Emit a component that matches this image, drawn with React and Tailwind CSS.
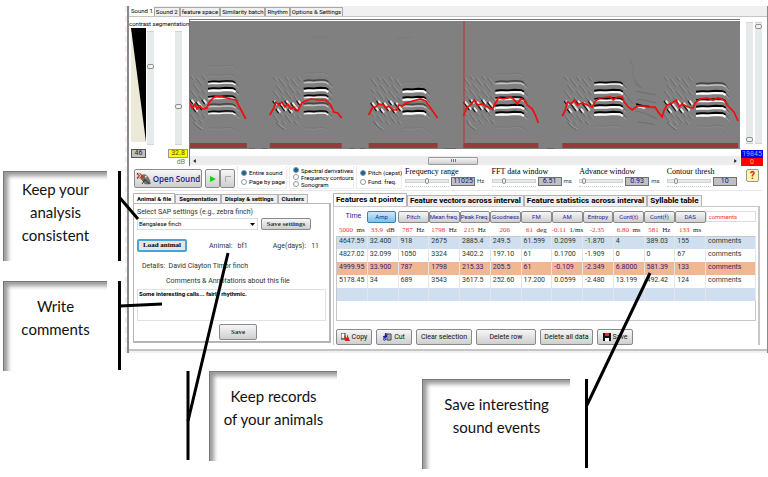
import { useState } from 'react';
import clsx from 'clsx';

const columns = ['Pitch', 'Mean freq.', 'Peak Freq.', 'Goodness', 'FM', 'AM', 'Entropy', 'Cont(t)', 'Cont(f)', 'DAS'];

const units = [
  ['5000', 'ms'], ['33.9', 'dB'], ['787', 'Hz'], ['1798', 'Hz'], ['215', 'Hz'], ['206', ''], ['61', 'deg'],
  ['-0.11', '1/ms'], ['-2.35', ''], ['6.80', 'ms'], ['581', 'Hz'], ['133', 'ms'], ['', ''],
];

const rows = [
  ['4647.59', '32.400', '918', '2675', '2885.4', '249.5', '61.599', '0.2099', '-1.870', '4', '389.03', '155', 'comments'],
  ['4827.02', '32.099', '1050', '3324', '3402.2', '197.10', '61', '0.1700', '-1.909', '0', '0', '67', 'comments'],
  ['4999.95', '33.900', '787', '1798', '215.33', '205.5', '61', '-0.109', '-2.349', '6.8000', '581.39', '133', 'comments'],
  ['5178.45', '34', '689', '3543', '3617.5', '252.60', '17.200', '0.0599', '-2.480', '13.199', '492.42', '124', 'comments'],
  ['', '', '', '', '', '', '', '', '', '', '', '', ''],
];

const rowColors = ['bg-[#cfdff0]', 'bg-white', 'bg-[#f0b890]', 'bg-white', 'bg-[#cfdff0]'];

// noise: x range of the opening notes, block: x range of the harmonic stack, lines: [y, weight]
const syllables = [
  { noise: [0, 17], block: [18, 45], lines: [[60, 2], [67, 3], [75, 2], [83, 1], [90, 2], [45, 0], [54, 0], [107, 0]] },
  { noise: [83, 112], block: [114, 138], lines: [[59, 1], [67, 3], [74, 2], [82, 1], [90, 2], [52, 0], [107, 0]] },
  { noise: [181, 212], block: [213, 236], lines: [[61, 0], [68, 3], [76, 3], [83, 1], [90, 3], [96, 0], [107, 0]] },
  { noise: [274, 305], block: [306, 334], lines: [[60, 1], [69, 3], [76, 2], [84, 3], [91, 3], [53, 0], [106, 0]] },
  { noise: [375, 403], block: [405, 433], lines: [[61, 2], [69, 4], [77, 2], [84, 3], [91, 3], [105, 0]] },
  { noise: [475, 504], block: [507, 536], lines: [[62, 1], [70, 4], [78, 2], [85, 3], [92, 4], [105, 0]] },
];

const contours = [
  '0,82 2,87 5,83 7,88 10,85 13,88 17,87 19,82 23,77 27,75 33,76 41,78 46,79 49,85 56,98',
  '80,94 84,87 86,81 89,84 92,81 95,86 98,83 101,88 104,86 108,90 112,82 116,80 121,78 129,79 136,79 141,84 144,91 148,92 152,97',
  '179,94 183,86 186,86 189,83 194,84 196,87 199,85 204,89 207,89 209,84 213,85 216,82 223,80 231,78 236,80 241,87 248,97',
  '274,95 277,87 281,84 285,79 288,84 293,83 298,86 303,88 306,82 309,77 314,78 321,76 324,78 328,83 331,78 335,79 338,84 343,88 346,94 349,102',
  '373,95 376,89 378,81 382,83 385,79 388,84 393,82 398,84 403,86 406,80 411,77 421,76 424,79 428,76 433,76 435,81 439,86 443,89 448,85 453,85 459,86 466,86 469,91 473,96 475,89 478,84 483,82 487,79 490,86 493,83 499,86 504,87 506,82 511,78 518,77 524,79 529,77 535,79 538,84 542,88 545,91 549,100',
];

const segments = [[0, 57], [80, 72], [179, 69], [274, 75], [373, 176]];

const toolButton = 'border border-[#8a8a8a] rounded-[2px] bg-linear-to-b from-[#f6f6f6] to-[#cfcfcf] flex items-center justify-center whitespace-nowrap';

function Harmonic({ x0, x1, y, weight }) {
  const w = x1 - x0;
  const tail = (dy) => `M${x0} ${y + dy + 0.6} q${w * 0.15} -1.2 ${w * 0.3} -.5 t${w * 0.3} -.3 t${w * 0.35} .8 q3 1.2 5 5`;
  const stack = (dy) => `M${x0} ${y + dy + 0.8} l${w * 0.2} -.6 l${w * 0.22} .3 l${w * 0.25} -.7 l${w * 0.25} .4 l${w * 0.1} 1.6`;
  if (weight === 0) {
    return (
      <g fill="none" strokeWidth="0.7" opacity="0.7">
        <path d={tail(0)} stroke="#6e6e6e" />
        <path d={tail(1)} stroke="#949494" />
      </g>
    );
  }
  return (
    <g fill="none">
      <path d={tail(0)} stroke="#555" strokeWidth="0.8" />
      <path d={tail(2)} stroke="#aaa" strokeWidth="0.8" />
      <path d={stack(0)} stroke={weight > 1 ? '#000' : '#444'} strokeWidth={weight > 2 ? 2 : 1.3} />
      <path d={stack(2.2)} stroke={weight > 1 ? '#fff' : '#c4c4c4'} strokeWidth={weight > 2 ? 2.2 : 1.2} />
    </g>
  );
}

function Noise({ from, to }) {
  const marks = [];
  for (let r = 0; r < 8; r++) {
    for (let x = from + (r % 2) * 3; x < to - 3; x += 6) {
      const y = 55 + r * 6 + ((x * 7 + r * 5) % 4);
      const strong = r >= 4 && r <= 5;
      marks.push(
        <g key={`${r}-${x}`} strokeWidth={strong ? 1.8 : 0.8} opacity={strong ? 0.9 : 0.55}>
          <path d={`M${x} ${y} l3 4`} stroke={strong ? '#111' : '#505050'} />
          <path d={`M${x + 1.6} ${y - 0.4} l3 4`} stroke={strong ? '#f4f4f4' : '#adadad'} />
        </g>
      );
    }
  }
  return (
    <g fill="none">
      {marks}
      <path d={`M${from + 3} 101 q3 5 9 8`} stroke="#5c5c5c" strokeWidth="0.8" />
      <path d={`M${from + 5} 101 q3 5 8 7`} stroke="#a8a8a8" strokeWidth="0.7" />
    </g>
  );
}

function Spectrogram() {
  return (
    <svg viewBox="0 0 551 129" preserveAspectRatio="none" className="block w-full h-[129px]">
      <rect width="551" height="129" fill="#808080" />
      {syllables.map((s) => (
        <g key={s.block[0]}>
          <Noise from={s.noise[0]} to={s.noise[1]} />
          {s.lines.map(([y, weight]) => (
            <Harmonic key={y} x0={s.block[0]} x1={s.block[1]} y={y} weight={weight} />
          ))}
        </g>
      ))}
      <g fill="none" stroke="#6a6a6a" strokeWidth="0.8">
        <path d="M441 38 l4 12 M443 50 q2 10 6 15" stroke="#747474" />
        <path d="M447 70 q8 2 20 4 M448 78 q8 1 19 4 M446 62 l6 5" />
        <path d="M446 82 q8 2 20 6 M446 90 q9 1 22 8 M436 74 l8 9 M448 101 q8 0 18 3" />
        <path d="M122 17 q8 -2 17 -1 M206 18 q8 -1 16 -2" stroke="#787878" />
      </g>
      <path d="M447 83 l7 2 l6 .5" fill="none" stroke="#000" strokeWidth="1.4" />
      <path d="M449 86 l7 1.4" fill="none" stroke="#fff" strokeWidth="1.2" />
      {segments.map(([x, w]) => (
        <rect key={x} x={x} y="122" width={w} height="5" fill="#943c3c" />
      ))}
      <path d="M0 128.5 h551" stroke="#fff" />
      <path d="M59 127.5 h6 M72 127.5 h5 M159 127.5 h6 M170 127.5 h6 M254 127.5 h12 M357 127.5 h8" stroke="#666" />
      {contours.map((points) => (
        <polyline key={points} points={points} fill="none" stroke="#f50a0a" strokeWidth="1.7" />
      ))}
      <path d="M274.5 0 v127" stroke="#c43030" strokeWidth="1" />
    </svg>
  );
}

function VSlider({ label, value, className }) {
  return (
    <input
      type="range"
      aria-label={label}
      defaultValue={value}
      className={clsx(
        'appearance-none w-[7px] [writing-mode:vertical-lr] [direction:rtl] bg-[#e6eaea] border-x border-[#d2d4d4] shrink-0',
        '[&::-webkit-slider-thumb]:appearance-none [&::-webkit-slider-thumb]:w-[7px] [&::-webkit-slider-thumb]:h-[5px]',
        '[&::-webkit-slider-thumb]:rounded-[2px] [&::-webkit-slider-thumb]:border [&::-webkit-slider-thumb]:border-[#8e8e8e] [&::-webkit-slider-thumb]:bg-[#f2f2f2]',
        className
      )}
    />
  );
}

function Setting({ label, value, unit, slider }) {
  return (
    <label className="block shrink-0">
      <span className="block font-['Liberation_Serif',serif] text-[8px] leading-[9px] text-black whitespace-nowrap">{label}</span>
      <span className="flex items-center gap-[2px] h-[10px]">
        <input
          type="range"
          aria-label={`${label} slider`}
          defaultValue={slider}
          className="appearance-none w-[44px] h-[4px] bg-[#e6eaea] border border-[#cfd2d2] [&::-webkit-slider-thumb]:appearance-none [&::-webkit-slider-thumb]:w-[4px] [&::-webkit-slider-thumb]:h-[6px] [&::-webkit-slider-thumb]:rounded-[2px] [&::-webkit-slider-thumb]:border [&::-webkit-slider-thumb]:border-[#8e8e8e] [&::-webkit-slider-thumb]:bg-[#f2f2f2]"
        />
        <input
          defaultValue={value}
          className="w-[24px] h-[9px] bg-[#c0c0c0] border border-[#707070] text-[7px] leading-none text-center text-[#10108c]"
        />
        <span className="text-[6px] leading-none text-[#333]">{unit}</span>
      </span>
      <span className="block w-[44px] border-b border-dotted border-[#ccc]" />
    </label>
  );
}

function RadioGroup({ name, options, className }) {
  return (
    <fieldset className={clsx('min-w-0 border border-t-0 border-[#ececec] flex flex-col justify-center pl-[3px]', className)}>
      {options.map((option, i) => (
        <label key={option} className="flex items-center gap-[2px] text-[6px] leading-[7px] text-black whitespace-nowrap">
          <input
            type="radio"
            name={name}
            defaultChecked={i === 0}
            className="appearance-none size-[6px] rounded-full border border-[#8f9aa5] bg-white checked:bg-[#1d5f93] checked:border-[#7d97ad] shrink-0"
          />
          {option}
        </label>
      ))}
    </fieldset>
  );
}

function Callout({ lines, className }) {
  return (
    <div className={clsx("h-[90px] border-l border-t border-[#777] bg-white shadow-[inset_4px_4px_4px_#9a9a9a] text-center font-[Lato,sans-serif] text-[15px] leading-[23px] text-[#111]", className)}>
      {lines.map((line) => <p key={line} className="whitespace-nowrap">{line}</p>)}
    </div>
  );
}

function Finch() {
  return (
    <svg viewBox="0 0 18 14" className="w-[16px] h-[13px] shrink-0" fill="none">
      <path d="M1 2 l3 2 l-3 2 M4 1 l3 3 l-3 3" stroke="#e03020" strokeWidth="1.2" />
      <path d="M1 1 l2 1 M1 7 l2 -1" stroke="#222" />
      <path d="M6 4 q4 -3 7 1 q3 4 3 8 h-6 q-1 -3 -4 -5 z" fill="#7b7670" stroke="#444" strokeWidth="0.7" />
      <path d="M6 4 l4 1 l-2 3 z" fill="#c03a20" />
      <path d="M10 8 l-3 5 M10 8 l5 5" stroke="#222" strokeWidth="1.1" />
      <circle cx="11" cy="5" r="1" fill="#eee" />
    </svg>
  );
}

function TopArea() {
  return (
    <div className="flex h-[147px]">
      <div className="w-[60px] shrink-0 flex flex-col">
        <p className="text-[6px] leading-[9px] text-black whitespace-nowrap">contrast segmentation</p>
        <div className="flex h-[120px] pl-[2px]">
          <svg viewBox="0 0 15 114" className="w-[15px] h-[114px]">
            <rect width="15" height="114" fill="#ece9d8" />
            <path d="M0 0 H15 V114 Z" fill="#000" />
          </svg>
          <VSlider label="contrast" value={70} className="h-[114px] mt-[3px] ml-px" />
          <VSlider label="segmentation" value={33} className="h-[114px] mt-[3px] ml-[21px]" />
        </div>
        <div className="flex justify-between pl-[2px] pr-px pt-px">
          <output className="w-[15px] h-[9px] bg-[#c0c0c0] border border-[#555] text-[7px] leading-[7px] text-center text-[#222]">46</output>
          <output className="w-[20px] h-[9px] bg-[#ffff00] border border-[#999] text-[7px] leading-[7px] text-center text-[#554400]">32.8</output>
        </div>
        <p className="text-[7px] leading-[8px] text-right pr-1 text-[#8a7c10]">dB</p>
      </div>
      <div className="flex-1 min-w-0 border-l border-t border-[#777] pt-px">
        <Spectrogram />
        <div className="mt-[6px] h-[9px] bg-[#ececec] flex items-center justify-between px-[3px] text-[#222]">
          <svg viewBox="0 0 4 6" className="w-[3px] h-[4px]"><path d="M4 0 V6 L0 3 Z" fill="currentColor" /></svg>
          <div className="w-[50px] h-[8px] ml-[-24px] border border-[#9a9a9a] rounded-[1px] bg-linear-to-b from-[#f5f5f5] to-[#cfcfcf] flex items-center justify-center gap-px">
            <i className="w-px h-[3px] bg-[#777]" /><i className="w-px h-[3px] bg-[#777]" /><i className="w-px h-[3px] bg-[#777]" />
          </div>
          <svg viewBox="0 0 4 6" className="w-[3px] h-[4px]"><path d="M0 0 V6 L4 3 Z" fill="currentColor" /></svg>
        </div>
      </div>
      <div className="w-[27px] shrink-0 pt-[3px] pl-px">
        <div className="flex gap-[2px] pl-[5px] h-[128px]">
          <VSlider label="low" value={1} className="h-[122px]" />
          <VSlider label="high" value={99} className="h-[122px]" />
        </div>
        <output className="block w-[22px] h-[8px] bg-[#0000f0] text-[7px] leading-[8px] text-center text-[#a8a8ff]">19845</output>
        <output className="block w-[22px] h-[8px] bg-[#ff0000] text-[7px] leading-[8px] text-center text-[#ffd040]">0</output>
      </div>
    </div>
  );
}

function ControlRow() {
  return (
    <div className="flex h-[24px] pl-[5px] pr-[8px]">
      <button className={clsx(toolButton, 'w-[68px] h-[19px] mt-[3px] gap-px shrink-0')}>
        <Finch />
        <span className="font-['Open_Sans',sans-serif] font-semibold text-[8px] leading-none text-[#18188c]">Open Sound</span>
      </button>
      <div className="flex mt-[3px] ml-[3px] shrink-0">
        <button aria-label="Play" className={clsx(toolButton, 'w-[15px] h-[19px]')}>
          <svg viewBox="0 0 6 6" className="size-[6px]"><path d="M0 0 L6 3 L0 6 Z" fill="#18d018" /></svg>
        </button>
        <button aria-label="Stop" className={clsx(toolButton, 'w-[15px] h-[19px]')}>
          <svg viewBox="0 0 6 6" className="size-[6px]"><path d="M.5 6 V.5 H6" fill="none" stroke="#aaa" /></svg>
        </button>
      </div>
      <RadioGroup name="view" options={['Entire sound', 'Page by page']} className="w-[50px] h-[23px] ml-[2px] gap-[2px] shrink-0" />
      <RadioGroup name="display" options={['Spectral derivatives', 'Frequency contours', 'Sonogram']} className="w-[65px] h-[23px] ml-[2px] shrink-0" />
      <RadioGroup name="pitch" options={['Pitch (cepst)', 'Fund. freq.']} className="w-[46px] h-[23px] ml-[2px] gap-[2px] shrink-0" />
      <div className="flex flex-1 justify-between pl-[3px] pt-px">
        <Setting label="Frequency range" value="11025" unit="Hz" slider={50} />
        <Setting label="FFT data window" value="6.51" unit="ms" slider={25} />
        <Setting label="Advance window" value="0.93" unit="ms" slider={6} />
        <Setting label="Contour thresh" value="10" unit="" slider={17} />
        <button aria-label="Help" className="size-[13px] mt-[2px] border border-[#999] rounded-[2px] bg-[#f8f4b0] text-[10px] leading-none font-bold text-[#d02010] shrink-0">?</button>
      </div>
    </div>
  );
}

function TabBar({ tabs, size }) {
  const [active, setActive] = useState(0);
  return (
    <div className="flex items-end">
      {tabs.map((tab, i) => (
        <button
          key={tab}
          onClick={() => setActive(i)}
          className={clsx(
            'font-bold text-black whitespace-nowrap leading-none border border-b-0 border-[#b5b5b5]',
            size === 'lg' ? 'text-[8px] px-[2px]' : 'text-[6px] px-[3px]',
            i === active ? 'bg-white' : 'bg-[#f0f0f0]',
            size === 'lg' ? (i === active ? 'h-[13px]' : 'h-[11px]') : (i === active ? 'h-[10px]' : 'h-[9px]')
          )}
        >
          {tab}
        </button>
      ))}
    </div>
  );
}

function AnimalPanel() {
  return (
    <section className="w-[198px] shrink-0 flex flex-col">
      <TabBar tabs={['Animal & file', 'Segmentation', 'Display & settings', 'Clusters']} />
      <div className="flex-1 border border-[#b5b5b5] border-r-2 border-b-2 px-[3px] pt-[3px] text-[7px] leading-[10px] text-[#333]">
        <label htmlFor="sap" className="block">Select SAP settings (e.g., zebra finch)</label>
        <div className="flex gap-[3px] mt-px">
          <div className="relative w-[121px] h-[12px]">
            <select id="sap" className="appearance-none w-full h-full border border-[#dcdcdc] pl-px text-[6px] leading-none text-black bg-white">
              <option>Bengalese finch</option>
            </select>
            <svg viewBox="0 0 5 3" className="absolute right-[3px] top-[5px] w-[5px] h-[3px] pointer-events-none"><path d="M0 0 H5 L2.5 3 Z" fill="#000" /></svg>
          </div>
          <button className={clsx(toolButton, "w-[50px] h-[12px] font-['Liberation_Serif',serif] font-bold text-[7px] leading-none")}>Save settings</button>
        </div>
        <div className="flex items-center mt-[9px]">
          <button className="w-[50px] h-[13px] border-2 border-[#4ba3cf] rounded-[2px] bg-[#e6e6e6] font-['Liberation_Serif',serif] font-bold text-[7px] leading-none text-black whitespace-nowrap">Load animal</button>
          <span className="ml-[22px]">Animal:</span>
          <span className="ml-[5px]">bf1</span>
          <span className="ml-[25px]">Age(days):</span>
          <span className="ml-[5px]">11</span>
        </div>
        <p className="mt-[9px] pl-[5px]">Details:&nbsp; David Clayton Timor finch</p>
        <label htmlFor="notes" className="block mt-[5px] pl-[29px]">Comments &amp; Annotations about this file</label>
        <textarea
          id="notes"
          defaultValue="Some interesting calls... fairly rhythmic."
          className="block mt-[3px] w-full h-[32px] border border-[#dde3e8] pl-px resize-none overflow-hidden font-bold text-[6px] leading-[8px] text-black"
        />
        <button className={clsx(toolButton, "w-[38px] h-[16px] mt-[3px] ml-[82px] font-['Liberation_Serif',serif] font-bold text-[7px] leading-none")}>Save</button>
      </div>
    </section>
  );
}

function FeatureTable() {
  return (
    <table className="w-full table-fixed border-collapse text-[7px] leading-none">
      <colgroup>
        {units.map((u, i) => <col key={i} className={i === 12 ? 'w-[50px]' : ''} />)}
      </colgroup>
      <thead>
        <tr className="h-[15px] text-[#1a1a9c]">
          <th className="p-0 pr-[6px] font-normal text-right">Time</th>
          <th className="p-0 pr-[2px]">
            <button className="w-full h-[12px] border border-[#3c7fb1] rounded-[2px] bg-linear-to-b from-[#cdeafa] to-[#7cc0e8] text-[6px] leading-none font-normal">Amp</button>
          </th>
          {columns.map((c) => (
            <th key={c} className="p-0">
              <button className={clsx(toolButton, 'w-full h-[12px] text-[6px] leading-none font-normal')}>{c}</button>
            </th>
          ))}
          <th className="p-0">
            <input aria-label="comments" defaultValue="comments" className="block w-full h-[11px] mb-px border border-[#ddd] pl-[2px] text-[6px] leading-none font-normal text-[#f03030]" />
          </th>
        </tr>
        <tr className="h-[12px] font-['Liberation_Serif',serif]">
          {units.map(([value, unit], i) => (
            <td key={i} className="p-0 pt-[2px] text-center whitespace-nowrap text-[7px] text-[#222]">
              <span className="text-[#f03030]">{value}</span>&nbsp; {unit}
            </td>
          ))}
        </tr>
      </thead>
      <tbody className="border border-b-0 border-[#c4c8cc]">
        {rows.map((row, r) => (
          <tr key={r} className={clsx('h-[13px]', rowColors[r], r === 2 ? 'text-[#351c75]' : 'text-[#1f3d2b]')}>
            {row.map((cell, i) => (
              <td key={i} className="p-0 pb-[2px] pl-[2px] border-r border-[#e3e6e6]">{cell}</td>
            ))}
          </tr>
        ))}
      </tbody>
    </table>
  );
}

function FeaturesPanel() {
  return (
    <section className="flex-1 min-w-0 flex flex-col">
      <TabBar size="lg" tabs={['Features at pointer', 'Feature vectors across interval', 'Feature statistics across interval', 'Syllable table']} />
      <div className="flex-1 border-l border-t border-r-2 border-[#c8c8c8] pl-[2px] pr-[2px] pt-[2px]">
        <FeatureTable />
        <div className="h-[20px] border border-t-0 border-[#c4c8cc]" />
        <div className="flex gap-[4px] mt-[8px] text-[7px] leading-none text-[#111]">
          <button className={clsx(toolButton, 'w-[36px] h-[16px] gap-[2px]')}>
            <svg viewBox="0 0 9 8" className="w-[9px] h-[8px]">
              <path d="M0 0 h4 v6 h-4 z" fill="#fff" stroke="#333" strokeWidth="1" />
              <path d="M3 2 l3 3 v-4 l3 7 h-5 z" fill="#d02020" />
              <path d="M1 5 l4 2" stroke="#209030" />
            </svg>
            Copy
          </button>
          <button className={clsx(toolButton, 'w-[36px] h-[16px] gap-[2px]')}>
            <svg viewBox="0 0 9 8" className="w-[9px] h-[8px]" fill="none">
              <path d="M4 1 h4 v6 h-4 z" fill="#dde" stroke="#334" />
              <path d="M5 3 h2 M5 5 h2" stroke="#334" strokeWidth="0.7" />
              <path d="M3 0 l-1 5 M0 4 l4 -1" stroke="#1818a0" strokeWidth="1.6" />
              <circle cx="1.5" cy="6.3" r="1" stroke="#1818a0" />
            </svg>
            Cut
          </button>
          <button className={clsx(toolButton, 'w-[56px] h-[16px]')}>Clear selection</button>
          <button className={clsx(toolButton, 'w-[60px] h-[16px]')}>Delete row</button>
          <button className={clsx(toolButton, 'w-[53px] h-[16px]')}>Delete all data</button>
          <button className={clsx(toolButton, 'w-[36px] h-[16px] gap-[2px]')}>
            <svg viewBox="0 0 8 8" className="size-[8px]">
              <path d="M0 0 h8 v8 h-8 z" fill="#111" />
              <path d="M2 0 h4 v3 h-4 z" fill="#d03030" />
              <path d="M2 5 h4 v3 h-4 z" fill="#fff" />
            </svg>
            Save
          </button>
        </div>
      </div>
    </section>
  );
}

function App() {
  const [page, setPage] = useState('Sound 1');
  const pages = ['Sound 1', 'Sound 2', 'feature space', 'Similarity batch', 'Rhythm', 'Options & Settings'];

  return (
    <div className="relative flex bg-white font-[Roboto,'Liberation_Sans',sans-serif] text-black">
      <aside className="w-[125px] shrink-0 pt-[171px] pl-[3px] flex flex-col gap-[20px]">
        <Callout lines={['Keep your', 'analysis', 'consistent']} className="w-[104px] pt-[6px]" />
        <Callout lines={['Write', 'comments']} className="w-[104px] pt-[13px]" />
      </aside>
      <main className="flex-1 min-w-0 pt-[6px]">
        <div className="border-l-2 border-dashed border-[#fbeaea]">
          <div className="border-l-2 border-[#8a8a8a] border-solid border-r">
            <nav className="flex items-end h-[11px] pl-px bg-[#f0f0f0] border-b border-[#c4c4c4]">
              {pages.map((p) => (
                <button
                  key={p}
                  onClick={() => setPage(p)}
                  className={clsx(
                    'text-[6px] leading-none px-px whitespace-nowrap',
                    p === page ? 'h-[10px] bg-white' : 'h-[9px] bg-[#f0f0f0] border border-b-0 border-[#a8a8a8]'
                  )}
                >
                  {p}
                </button>
              ))}
            </nav>
            <div className="pt-[2px]">
              <TopArea />
              <ControlRow />
              <div className="mx-[5px] border-t border-[#e8e8e8]" />
              <div className="flex gap-[2px] h-[152px] pt-[2px] pl-[4px] pr-[7px]">
                <AnimalPanel />
                <FeaturesPanel />
              </div>
            </div>
            <div className="mt-[6px] h-[4px] border-t-2 border-[#c4c4c4] bg-[#f0f0f0]" />
          </div>
        </div>
        <div className="flex items-start pt-[18px] pl-[84px]">
          <Callout lines={['Keep records', 'of your animals']} className="w-[128px] pt-[13px]" />
          <Callout lines={['Save interesting', 'sound events']} className="w-[148px] pt-[13px] mt-[8px] ml-[85px]" />
        </div>
      </main>
      <svg width="768" height="477" viewBox="0 0 768 477" className="absolute left-0 top-0 pointer-events-none" stroke="#000" strokeWidth="3" fill="none">
        <path d="M119.5 171 v90 M119.5 281 v89 M188 371 v89 M586.5 379 v89" />
        <path d="M120 198 L138 219 M120 306 L162 304 M228 253 L188 421 M650 273 L587 405" />
      </svg>
    </div>
  );
}

export default App;
